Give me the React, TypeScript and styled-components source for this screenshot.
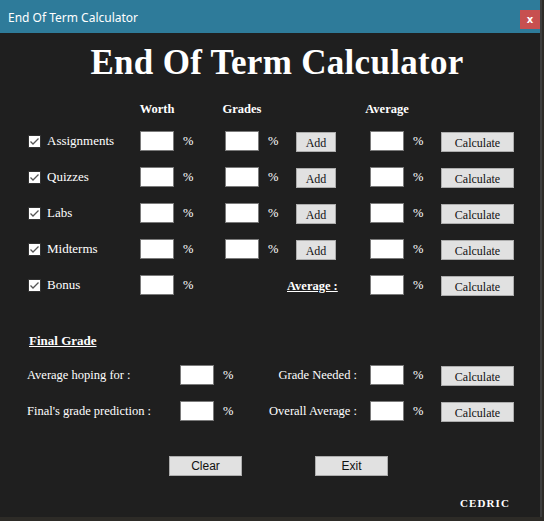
import React from "react";
import styled, { createGlobalStyle } from "styled-components";

const Global = createGlobalStyle`
  html, body { margin: 0; padding: 0; background: #2d2b27; }
  body { width: 544px; height: 521px; overflow: hidden; }
`;

const serif = `"Liberation Serif", "DejaVu Serif", serif`;

const Window = styled.div`
  width: 542px;
  height: 517px;
  background: #1f1f1f;
  display: flex;
  flex-direction: column;
  border-right: 2px solid #3c3c3c;
  box-sizing: border-box;
`;

const TitleBar = styled.div`
  height: 33px;
  flex: none;
  background: #2e7b9a;
  display: flex;
  justify-content: space-between;
  align-items: flex-start;
`;

const TitleText = styled.span`
  font-family: "Noto Sans", "Open Sans", sans-serif;
  font-size: 12px;
  color: #ffffff;
  margin: 9px 0 0 8px;
`;

const CloseBox = styled.div`
  width: 20px;
  height: 19px;
  margin-top: 10px;
  background: #c75050;
  color: #fff;
  font-family: "DejaVu Sans", sans-serif;
  font-weight: bold;
  font-size: 10px;
  display: flex;
  align-items: center;
  justify-content: center;
`;

const Heading = styled.h1`
  margin: 0;
  height: 62px;
  font-family: ${serif};
  font-weight: bold;
  font-size: 35px;
  color: #ffffff;
  text-align: center;
  padding-left: 14px;
  line-height: 60px;
  letter-spacing: 0.3px;
`;

const Table = styled.div`
  display: grid;
  grid-template-columns: 111px 34px 51px 34px 37px 74px 34px 37px 73px;
  grid-template-rows: 28px repeat(5, 36px);
  padding-left: 29px;
  align-items: center;
`;

const ColHead = styled.div<{ $col: number }>`
  grid-column: ${(p) => p.$col};
  display: flex;
  justify-content: center;
  font-family: ${serif};
  font-weight: bold;
  font-size: 12.5px;
  color: #ffffff;
  white-space: nowrap;
`;

const CheckLabel = styled.label`
  grid-column: 1;
  display: flex;
  align-items: center;
  gap: 6px;
  margin-left: -1px;
  font-family: ${serif};
  font-size: 13px;
  color: #ffffff;
`;

const Label = styled.span`
  font-family: ${serif};
  font-size: 12.5px;
  color: #ffffff;
  white-space: nowrap;
  margin-left: -2px;
`;

const Box = styled.div`
  width: 34px;
  height: 20px;
  box-sizing: border-box;
  background: #ffffff;
  border: 1px solid #7a7a7a;
`;

const Pct = styled.span`
  font-family: ${serif};
  font-size: 12.5px;
  color: #ffffff;
  padding-left: 9px;
`;

const Btn = styled.div<{ $w: number; $sans?: boolean }>`
  width: ${(p) => p.$w}px;
  height: 20px;
  box-sizing: border-box;
  background: #e1e1e1;
  border: 1px solid #adadad;
  display: flex;
  align-items: center;
  justify-content: center;
  font-family: ${(p) => (p.$sans ? `"Liberation Sans", Arial, sans-serif` : serif)};
  font-size: 12px;
  color: #111;
  padding-top: ${(p) => (p.$sans ? 0 : 3)}px;
  margin-top: 2px;
`;

const AvgLabel = styled.span`
  grid-column: 5 / 7;
  padding-left: 28px;
  font-family: ${serif};
  font-weight: bold;
  font-size: 12.5px;
  color: #fff;
  text-decoration: underline;
  margin-top: 2px;
`;

const Section = styled.div`
  padding: 30px 0 0 29px;
`;

const SectionTitle = styled.div`
  font-family: ${serif};
  font-weight: bold;
  font-size: 13px;
  color: #fff;
  text-decoration: underline;
  height: 18px;
`;

const FinalGrid = styled.div`
  display: grid;
  grid-template-columns: 151px 34px 37px 119px 34px 37px 73px;
  grid-template-rows: repeat(2, 36px);
  align-items: center;
  margin-top: 6px;
`;

const RightLabel = styled(Label)`
  padding-right: 13px;
  margin-left: 0;
  text-align: right;
`;

const BottomRow = styled.div`
  display: flex;
  gap: 73px;
  padding: 25px 0 0 169px;
`;

const Footer = styled.div`
  display: flex;
  justify-content: flex-end;
  padding: 21px 30px 0 0;
  font-family: ${serif};
  font-weight: bold;
  font-size: 11px;
  letter-spacing: 1.1px;
  color: #fff;
`;

const Check = () => (
  <svg width="13" height="13" viewBox="0 0 13 13">
    <rect x="0.5" y="0.5" width="12" height="12" fill="#ffffff" stroke="#333" />
    <path d="M2.5 6.5 L5 9 L10.5 3.5" fill="none" stroke="#555" strokeWidth="1.3" />
  </svg>
);

const rows = ["Assignments", "Quizzes", "Labs", "Midterms"];

export default function App() {
  return (
    <>
      <Global />
      <Window>
        <TitleBar>
          <TitleText>End Of Term Calculator</TitleText>
          <CloseBox>x</CloseBox>
        </TitleBar>
        <Heading>End Of Term Calculator</Heading>
        <Table>
          <ColHead $col={2}>Worth</ColHead>
          <ColHead $col={4}>Grades</ColHead>
          <ColHead $col={7}>Average</ColHead>
          {rows.map((name) => (
            <React.Fragment key={name}>
              <CheckLabel>
                <Check />
                {name}
              </CheckLabel>
              <Box />
              <Pct>%</Pct>
              <Box />
              <Pct>%</Pct>
              <Btn $w={40}>Add</Btn>
              <Box />
              <Pct>%</Pct>
              <Btn $w={73}>Calculate</Btn>
            </React.Fragment>
          ))}
          <CheckLabel>
            <Check />
            Bonus
          </CheckLabel>
          <Box />
          <Pct>%</Pct>
          <span />
          <AvgLabel>Average :</AvgLabel>
          <Box />
          <Pct>%</Pct>
          <Btn $w={73}>Calculate</Btn>
        </Table>
        <Section>
          <SectionTitle>Final Grade</SectionTitle>
          <FinalGrid>
            <Label>Average hoping for :</Label>
            <Box />
            <Pct>%</Pct>
            <RightLabel>Grade Needed :</RightLabel>
            <Box />
            <Pct>%</Pct>
            <Btn $w={73}>Calculate</Btn>
            <Label>Final's grade prediction :</Label>
            <Box />
            <Pct>%</Pct>
            <RightLabel>Overall Average :</RightLabel>
            <Box />
            <Pct>%</Pct>
            <Btn $w={73}>Calculate</Btn>
          </FinalGrid>
        </Section>
        <BottomRow>
          <Btn $w={73} $sans>Clear</Btn>
          <Btn $w={73} $sans>Exit</Btn>
        </BottomRow>
        <Footer>CEDRIC</Footer>
      </Window>
    </>
  );
}
